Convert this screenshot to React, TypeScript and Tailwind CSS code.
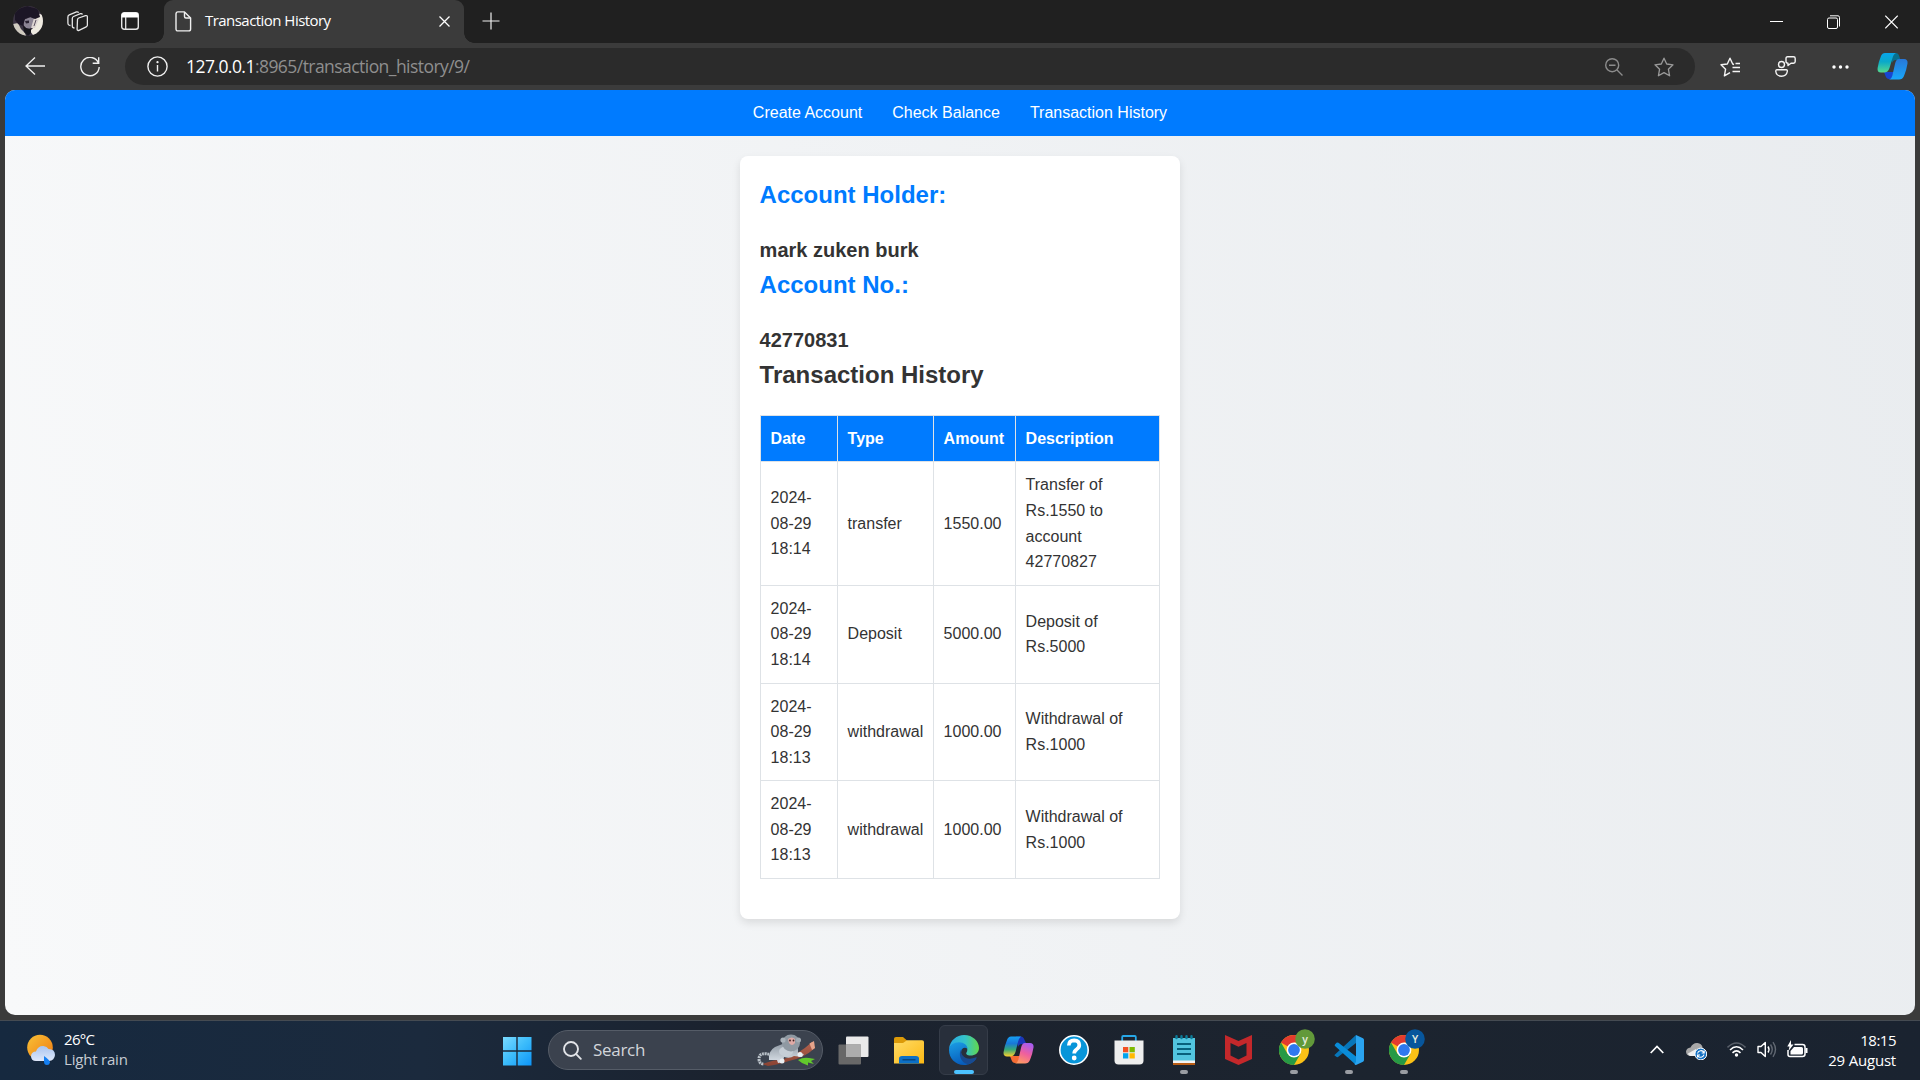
import React from "react";

const ui = "font-['Open_Sans','Noto_Sans',sans-serif]";

function Chrome({ letter, color }: { letter: string; color: string }) {
  return (
    <svg className="h-9 w-9" viewBox="0 0 36 36">
      <circle cx="15" cy="21" r="15" fill="#fbc116" />
      <path d="M15 21 L2 13.5 A15 15 0 0 1 28 13.5 H15Z" fill="#e33b2e" />
      <path d="M2 13.5 A15 15 0 0 0 15 36 L21.5 24.7 L15 21 L8.5 24.7Z" fill="#269a45" />
      <circle cx="15" cy="21" r="7.4" fill="#fff" />
      <circle cx="15" cy="21" r="5.9" fill="#2f78ee" />
      <circle cx="26" cy="10" r="9.8" fill={color} />
      <text x="26" y="13.500" textAnchor="middle" fontSize="10.5" fontWeight="600" fill="#e8eee0" fontFamily="Open Sans, sans-serif">{letter}</text>
    </svg>
  );
}

function Avatar() {
  return (
    <svg className="h-[30px] w-[30px]" viewBox="0 0 30 30">
      <defs><clipPath id="av"><circle cx="15" cy="15" r="15" /></clipPath><filter id="avb"><feGaussianBlur stdDeviation=".6" /></filter></defs>
      <g clipPath="url(#av)">
        <rect width="30" height="30" fill="#3a3342" />
        <g filter="url(#avb)">
          <path d="M0 18 L5 17 L8 23 L12 27 L13 30 H3 L0 25Z" fill="#cfcabf" />
          <path d="M10 14 L18 11 L22 13 L20 20 L15 24 L11 20Z" fill="#8b8494" />
          <path d="M12 15 L16 14.500 L16 17 L13 17.500Z" fill="#2a2231" />
          <path d="M24 7 L30 9 V24 L26 28 L20 29 L17 25 L22 20Z" fill="#eeeae0" />
          <path d="M21 12 L26 13 L22 22 L18 22Z" fill="#dcd4d2" />
          <path d="M23 14 L21 20" stroke="#5c5261" strokeWidth="1" />
          <path d="M2 4 L14 0 L25 3 L27 11 L22 13 L17 11 L12 13 L10 20 L5 18 L2 14Z" fill="#1f1726" />
          <path d="M10 19 L13 22 L18 23 L18 27 L15 30 L11 26Z" fill="#17121d" />
        </g>
      </g>
    </svg>
  );
}

function EdgeCopilot() {
  return (
    <svg className="h-[28px] w-[31px]" viewBox="0 0 31 28">
      <defs>
        <linearGradient id="c1" x1="0" y1="0" x2="0" y2="1"><stop stopColor="#08a5ea" /><stop offset=".45" stopColor="#0aa9c9" /><stop offset="1" stopColor="#56d98c" /></linearGradient>
        <linearGradient id="c2" x1="0" y1="0" x2="0" y2="1"><stop stopColor="#2877d8" /><stop offset="1" stopColor="#18a8fb" /></linearGradient>
      </defs>
      <path d="M7 20 H17 L15 26 Q14 27.5 12 27 Q9.500 27 8.500 24Z" fill="#1746d1" />
      <path d="M13 1 H19 Q21.500 1 22.500 5 L23.500 8 H19 Q16 8 15 11Z" fill="#08708e" />
      <path d="M8 1 H19 Q16.500 2 15.500 6 L12.500 16 Q11 20.500 7 20.500 H4 Q0 20.500 .6 16 Q1.500 10 4 4 Q5.200 1 8 1Z" fill="url(#c1)" />
      <path d="M22 7 H27 Q31 7 30.500 11.500 Q29.500 18 27 24 Q25.500 27.500 22 27.500 H12 Q14.500 27 15.500 23 L18 12 Q19 7 22 7Z" fill="url(#c2)" />
    </svg>
  );
}

function TaskCopilot() {
  return (
    <svg className="h-[28px] w-[31px]" viewBox="0 0 31 28">
      <defs>
        <linearGradient id="t1" x1="0" y1="0" x2="0" y2="1"><stop stopColor="#16a0f4" /><stop offset=".35" stopColor="#1978d8" /><stop offset=".65" stopColor="#36a978" /><stop offset="1" stopColor="#ffd12b" /></linearGradient>
        <linearGradient id="t2" x1=".7" y1="0" x2=".3" y2="1"><stop stopColor="#a65cf0" /><stop offset=".5" stopColor="#ef5f9e" /><stop offset="1" stopColor="#ff9b62" /></linearGradient>
      </defs>
      <path d="M7 20 H17 L15 26 Q14 27.500 12 27 Q9.500 27 8.500 24Z" fill="#f46c33" />
      <path d="M13 .5 H18 Q20.500 .5 21.500 4 L23.500 8 H19 Q16 8 15 11Z" fill="#1b36b9" />
      <path d="M8 .5 H18 Q16 2 15 6 L12.500 16 Q11 20.500 7 20.500 H4 Q0 20.500 .6 16 Q1.500 10 4 4 Q5.200 .5 8 .5Z" fill="url(#t1)" />
      <path d="M22 7 H27 Q31 7 30.500 11.500 Q29.500 18 27 24 Q25.500 27.500 22 27.500 H12 Q14.500 27 15.500 23 L18 12 Q19 7 22 7Z" fill="url(#t2)" />
    </svg>
  );
}

function Monkey() {
  return (
    <svg className="h-[34px] w-[60px]" viewBox="0 0 60 34">
      <defs>
        <linearGradient id="mk" x1="0" y1="0" x2="0" y2="1"><stop stopColor="#8f99a3" /><stop offset="1" stopColor="#dbe2e9" /></linearGradient>
        <linearGradient id="br" x1="0" y1="0" x2="0" y2="1"><stop stopColor="#b3634f" /><stop offset="1" stopColor="#8a4232" /></linearGradient>
      </defs>
      <path d="M41 27 Q46 24 52 25 L58 26 L54 28 L57 31 L51 29.500 L51 32.500 L45 30Z" fill="#62c92c" />
      <path d="M5 31 Q16 27 27 26 Q42 21 55 9 L58 15 Q47 25 32 28 Q20 32 11 33Z" fill="url(#br)" />
      <path d="M52.500 10.500 L57 8 L58 15 L55 17Z" fill="#e5a48b" />
      <path d="M15 22 Q2 18 2 26 Q2 31 7 31" fill="none" stroke="#b9c1c8" strokeWidth="3" strokeDasharray="2 .7" />
      <path d="M12 27 Q11 18 18 14 L28 10 L41 15 L41 20 L47 21 L45 24 L37 23 Q33 26 27 24 L26 29 L21 30 L20 27Z" fill="url(#mk)" />
      <ellipse cx="29" cy="18.500" rx="7" ry="5" fill="#c6ced6" />
      <ellipse cx="34" cy="10" rx="9" ry="8.500" fill="#8f99a2" />
      <circle cx="26" cy="7" r="2.600" fill="#aab3bb" /><circle cx="41.500" cy="7" r="2.500" fill="#a3acb4" />
      <path d="M31 6 Q35 3 38 6 L38 10 Q35 14 32 10Z" fill="#dfaaa6" />
      <circle cx="33" cy="7.500" r=".9" fill="#3d2222" /><circle cx="36.500" cy="7.500" r=".9" fill="#3d2222" />
      <circle cx="43" cy="21.500" r="2.500" fill="#e9eef2" /><circle cx="25" cy="28" r="2.500" fill="#e9eef2" />
    </svg>
  );
}

function TabStrip() {
  return (
    <div className={`flex h-[43px] items-end bg-[#202020] text-white ${ui}`}>
      <div className="flex h-[43px] w-[164px] shrink-0 items-center pl-[13px]">
        <div className="-mt-[2px]"><Avatar /></div>
        <svg className="ml-[24px] h-[21px] w-[21px]" viewBox="0 0 21 21" fill="none" stroke="#e6e6e6" strokeWidth="1.300" strokeLinejoin="round">
          <path d="M10.500 8.500 Q10.700 7.400 11.700 7 L18.500 4.700 Q20.400 4.300 20.400 6 V14 Q20.400 15.300 19.200 15.800 L12 19.300 Q10.100 20 10.100 18Z" />
          <path d="M7.500 17 Q5.300 17 5.300 15 V7.500 Q5.300 6 6.500 5.500 L13.500 2.700 Q15 2.400 15.500 3.500" />
          <path d="M3.500 14.500 Q.9 14.500 .9 12 V6 Q.9 4.500 2.300 3.900 L9.500 .9 Q11 .6 11.700 1.700" />
        </svg>
        <svg className="-mt-px ml-[33px] h-[18px] w-[18px]" viewBox="0 0 18 18">
          <rect x=".7" y=".7" width="16.600" height="16.600" rx="2.500" fill="none" stroke="#e6e6e6" strokeWidth="1.400" />
          <path d="M.7 5.500 V3 Q.7 .7 3 .7 H15 Q17.300 .7 17.300 3 V5.500Z" fill="#fff" />
          <path d="M4.700 5V17" stroke="#e6e6e6" strokeWidth="1.300" />
        </svg>
      </div>
      <div className="relative flex h-[43px] w-[300px] items-center rounded-t-[9px] bg-[#3b3b3b] pl-[11px] before:absolute before:bottom-0 before:-left-[10px] before:h-[10px] before:w-[10px] before:bg-[radial-gradient(circle_at_0_0,transparent_9.500px,#3b3b3b_10px)] after:absolute after:-right-[10px] after:bottom-0 after:h-[10px] after:w-[10px] after:bg-[radial-gradient(circle_at_100%_0,transparent_9.500px,#3b3b3b_10px)]">
        <svg className="h-[21px] w-[17px]" viewBox="0 0 17 21" fill="none" stroke="#f0f0f0" strokeWidth="1.400" strokeLinejoin="round">
          <path d="M3 .9 H9.500 L15.600 7 V18 Q15.600 19.900 13.700 19.900 H3 Q1 19.900 1 18 V3 Q1 .9 3 .9Z" /><path d="M9.500 1 V5.500 Q9.500 7 11 7 H15.500" />
        </svg>
        <span className="-mt-[3px] ml-[13px] w-[220px] text-[15px] leading-5 tracking-[-0.54px] whitespace-nowrap">Transaction History</span>
        <svg className="ml-[14px] h-[11px] w-[11px]" viewBox="0 0 11 11" stroke="#fff" strokeWidth="1.300"><path d="M.5 .5 L10.500 10.500 M10.500 .5 L.5 10.500" /></svg>
      </div>
      <svg className="mb-[13px] ml-[18px] h-[18px] w-[18px]" viewBox="0 0 18 18" stroke="#f0f0f0" strokeWidth="1.200"><path d="M9 .5 V17.500 M.5 9 H17.500" /></svg>
      <div className="mr-[22px] mb-[14px] ml-auto flex items-center">
        <svg className="h-[14px] w-[13px]" viewBox="0 0 13 14" stroke="#fff"><path d="M0 6.500H13" /></svg>
        <svg className="ml-[44px] h-[14px] w-[13px]" viewBox="0 0 13 14" fill="none" stroke="#fff"><rect x=".5" y="3" width="10" height="10.500" rx="1.500" /><path d="M3 .8 H11 Q12.500 .8 12.500 2.500 V11.500" /></svg>
        <svg className="ml-[45px] h-[14px] w-[13px]" viewBox="0 0 13 14" stroke="#fff" strokeWidth="1.100"><path d="M.3 .7 L12.700 13.300 M12.700 .7 L.3 13.300" /></svg>
      </div>
    </div>
  );
}

const star = "M10 1.200 L12.700 7 L19 7.800 L14.400 12.200 L15.600 18.800 L10 15.600 L4.400 18.800 L5.600 12.200 L1 7.800 L7.300 7Z";

function Toolbar() {
  return (
    <div className={`flex h-[47px] items-center bg-[#3b3b3b] ${ui}`}>
      <svg className="-mt-[2px] ml-[25px] h-[18px] w-[20px]" viewBox="0 0 20 18" fill="none" stroke="#f0f0f0" strokeWidth="1.300"><path d="M20 9 H1 M10 .5 L1 9 L10 17.500" /></svg>
      <svg className="ml-[35px] h-[20px] w-[20px]" viewBox="0 0 20 20" fill="none" stroke="#f0f0f0" strokeWidth="1.400"><path d="M18.500 6 A9.200 9.200 0 1 0 19.200 10 M18.700 .3 V6.300 H12.700" /></svg>
      <div className="ml-[25px] flex h-[37px] w-[1570px] items-center rounded-full bg-[#2b2b2b]">
        <svg className="ml-[22px] h-[21px] w-[21px]" viewBox="0 0 21 21" fill="none" stroke="#f0f0f0" strokeWidth="1.400"><circle cx="10.500" cy="10.500" r="9.600" /><path d="M10.500 9V15.500" /><circle cx="10.500" cy="6.200" r=".7" fill="#fff" stroke="none" /><circle cx="10.500" cy="6.200" r=".4" /></svg>
        <span className="-mt-[2px] ml-[18px] text-[17.500px] leading-6 tracking-[-0.550px] whitespace-nowrap text-[#8f8f8f]"><span className="text-white">127.0.0.1</span>:8965/transaction_history/9/</span>
        <svg className="ml-auto h-[18px] w-[18px]" viewBox="0 0 18 18" fill="none" stroke="#8c8c8c" strokeWidth="1.400"><circle cx="7.200" cy="7.200" r="6.500" /><path d="M12 12 L17.500 17.500 M4 7.200H10.500" /></svg>
        <svg className="mr-[21px] ml-[31px] h-[20px] w-[20px]" viewBox="0 0 20 20" fill="none" stroke="#9a9a9a" strokeWidth="1.300" strokeLinejoin="round"><path d={star} /></svg>
      </div>
      <svg className="ml-[25px] h-[20px] w-[20px]" viewBox="0 0 20 20" fill="none" stroke="#f5f5f5" strokeWidth="1.400" strokeLinejoin="round"><path d="M10 15.600 L4.400 18.800 L5.600 12.200 L1 7.800 L7.300 7 L10 1.200 L12.700 7 L14 7.500 M12.500 10.500H20 M12.500 14.500H20 M15.500 6.500H20" /></svg>
      <svg className="ml-[35px] h-[21px] w-[21px]" viewBox="0 0 21 21" fill="none" stroke="#f5f5f5" strokeWidth="1.400" strokeLinejoin="round"><circle cx="6.500" cy="8.500" r="3" /><path d="M2 13.700 H11.200 Q12.500 13.700 12.300 15.500 Q11.500 20.200 6.500 20.200 Q1.500 20.200 .8 15.500 Q.7 13.700 2 13.700Z M12.500 .8 H18.500 Q20.200 .8 20.200 2.500 V5.500 Q20.200 7.200 18.500 7.200 H16 L13 9.500 V7.200 Q11 7.200 11 5.500 V2.500 Q11 .8 12.500 .8Z" /></svg>
      <svg className="ml-[36px] h-[4px] w-[17px]" viewBox="0 0 17 4" fill="#fff"><circle cx="2" cy="2" r="1.700" /><circle cx="8.500" cy="2" r="1.700" /><circle cx="15" cy="2" r="1.700" /></svg>
      <div className="-mt-px ml-[28px]"><EdgeCopilot /></div>
    </div>
  );
}

const rows = [
  ["2024-08-29 18:14", "transfer", "1550.00", "Transfer of Rs.1550 to account 42770827"],
  ["2024-08-29 18:14", "Deposit", "5000.00", "Deposit of Rs.5000"],
  ["2024-08-29 18:13", "withdrawal", "1000.00", "Withdrawal of Rs.1000"],
  ["2024-08-29 18:13", "withdrawal", "1000.00", "Withdrawal of Rs.1000"],
];

function Page() {
  return (
    <main className="mx-[5px] h-[925px] overflow-hidden rounded-[10px] bg-[linear-gradient(76deg,#f8f9fa,#e9ecef)] font-['Liberation_Sans',Arial,sans-serif] text-base leading-[1.6] text-[#333]">
      <nav className="flex h-[45.6px] items-center justify-center gap-[30px] bg-[#007bff] text-white">
        <a>Create Account</a><a>Check Balance</a><a>Transaction History</a>
      </nav>
      <section className="mt-5 ml-[734.6px] w-[440px] rounded-lg bg-white p-5 shadow-[0_4px_8px_rgba(0,0,0,0.1)]">
        <h2 className="mb-5 text-2xl leading-[1.6] font-bold text-[#007bff]">Account Holder:</h2>
        <h3 className="text-xl leading-[1.6] font-bold">mark zuken burk</h3>
        <h2 className="mb-5 text-2xl leading-[1.6] font-bold text-[#007bff]">Account No.:</h2>
        <h3 className="text-xl leading-[1.6] font-bold">42770831</h3>
        <h2 className="mb-5 text-2xl leading-[1.6] font-bold">Transaction History</h2>
        <table className="mb-5 w-[400px] table-fixed border-collapse text-left">
          <colgroup><col className="w-[77px]" /><col className="w-[96px]" /><col className="w-[82px]" /><col /></colgroup>
          <thead><tr>{["Date", "Type", "Amount", "Description"].map((h) => <th key={h} className="border border-[#dee2e6] bg-[#007bff] p-[10px] font-bold text-white">{h}</th>)}</tr></thead>
          <tbody>{rows.map((r, i) => <tr key={i}>{r.map((c, j) => <td key={j} className="border border-[#dee2e6] p-[10px]">{c}</td>)}</tr>)}</tbody>
        </table>
      </section>
    </main>
  );
}

function Running() {
  return <span className="absolute bottom-px left-1/2 h-1 w-2 -translate-x-1/2 rounded-full bg-[#9a9da3]" />;
}

function Slot({ children, running = false }: { children: React.ReactNode; running?: boolean }) {
  return <div className="relative flex h-[50px] w-[55px] items-center justify-center">{children}{running && <Running />}</div>;
}

function Taskbar() {
  return (
    <footer className={`flex h-[60px] items-center border-t border-[#454b52] bg-[linear-gradient(to_right,#16293f,#1b2a3d_22%,#1b222e_38%,#1c242f_70%,#1a2330)] text-white ${ui}`}>
      <div className="-mt-[3px] flex w-[502px] items-center pl-[27px]">
        <svg className="h-[31px] w-[29px]" viewBox="0 0 29 31">
          <defs><linearGradient id="sun" x1="0" y1="0" x2="1" y2="1"><stop stopColor="#f8c136" /><stop offset="1" stopColor="#ef7a12" /></linearGradient><linearGradient id="cl" x1="0" y1="0" x2="0" y2="1"><stop stopColor="#a9c4ef" /><stop offset="1" stopColor="#dfe8fa" /></linearGradient></defs>
          <circle cx="13" cy="13.500" r="12.800" fill="url(#sun)" />
          <path d="M9 27 Q4 27 4 22 Q4.500 17.500 9 17.500 Q11 11.500 16.500 12 Q20 12.500 21.500 15 Q28 15 28 21 Q27.500 26.500 22 27Z" fill="url(#cl)" />
          <path d="M17 22 Q23 26 23 28.500 Q22.500 31 20 31 Q17 31 17 27.500Z" fill="#157ff2" />
        </svg>
        <div className="ml-[8px] text-[15px] leading-[20px] tracking-[-0.200px]"><div className="tracking-[-0.700px]">26°C</div><div className="text-[#c6cbd2]">Light rain</div></div>
      </div>
      <svg className="h-[30px] w-[30px]" viewBox="0 0 30 30"><defs><linearGradient id="win" gradientUnits="userSpaceOnUse" x1="0" y1="0" x2="30" y2="30"><stop stopColor="#7fdcff" /><stop offset=".5" stopColor="#3cbcfb" /><stop offset="1" stopColor="#0b93f8" /></linearGradient></defs><path d="M1 1H14.300V14.300H1Z M15.700 1H29.500V14.300H15.700Z M1 15.700H14.300V29.500H1Z M15.700 15.700H29.500V29.500H15.700Z" fill="url(#win)" /></svg>
      <div className="-mt-px ml-[16px] flex h-[40px] w-[275px] items-center rounded-full border border-[#555c67] bg-[#3b424e]">
        <svg className="ml-[14px] h-[19px] w-[19px]" viewBox="0 0 19 19" fill="none" stroke="#e2e4e8" strokeWidth="1.900" strokeLinecap="round"><circle cx="8" cy="8" r="7" /><path d="M13.200 13.200 L17.800 17.800" /></svg>
        <span className="ml-[11px] text-[17px] leading-6 tracking-[-0.300px] text-[#d2d5da]">Search</span>
        <div className="mr-[5px] ml-auto"><Monkey /></div>
      </div>
      <div className="-mt-px ml-[3px] flex items-center">
        <Slot><svg className="h-[29px] w-[31px]" viewBox="0 0 31 29"><rect x="8" y=".5" width="22.500" height="20.500" rx="1" fill="#eaeaea" /><rect x=".5" y="8.500" width="22.500" height="20" rx="1" fill="#686868" /><path d="M8 8.500H23V21H8Z" fill="#adadad" /></svg></Slot>
        <Slot><svg className="h-[27px] w-[30px]" viewBox="0 0 30 27"><defs><linearGradient id="fo" x1="0" y1="0" x2="1" y2="1"><stop stopColor="#ffdb66" /><stop offset="1" stopColor="#fcb914" /></linearGradient></defs><path d="M0 1.500 Q0 0 2 0 H9 L13 3.500 V8 H0Z" fill="#dc9a08" /><path d="M0 6 L9 6 L13 3.300 H28 Q30 3.300 30 5 V26.500 H0Z" fill="url(#fo)" /><path d="M5 26.500 V21.500 Q5 19 8 19 H22 Q25 19 25 21.500 V26.500Z" fill="#0c70c6" /><path d="M8.500 22.800H21.500" stroke="#073e70" strokeWidth="1.200" /></svg></Slot>
        <div className="relative mx-[3px] flex h-[50px] w-[49px] items-center justify-center rounded-[6px] border border-[#353c48] bg-[#282f3b]">
          <svg className="h-[30px] w-[30px]" viewBox="0 0 30 30"><defs><linearGradient id="e1"><stop stopColor="#27a9e8" /><stop offset=".55" stopColor="#35c3c7" /><stop offset="1" stopColor="#62d84b" /></linearGradient><linearGradient id="e2" x1="0" y1="0" x2=".4" y2="1"><stop stopColor="#1b9fe6" /><stop offset="1" stopColor="#075cbb" /></linearGradient></defs>
            <path d="M0 14 C1 5 8 0 15 0 C24 0 30 6.500 30 13 C30 18 26 20.500 21.500 20.500 C18 20.500 16.500 19 17.500 17.500 C20 14 17 9 10 9 C5 9 1 11 0 14Z" fill="url(#e1)" />
            <path d="M0 15 C0 10 5 7.200 10 7.200 C15 7.200 18.700 10.500 18.500 14 C16 11.500 12 13 12 18 C12 24 18 28 27 23.500 C25 27.500 20 30 15 30 C6 30 0 23 0 15Z" fill="url(#e2)" />
            <path d="M12.500 14 C9 18 11 28 19.500 29.300 C23 28.500 26 26 27.500 23.300 C28 22.300 27.300 22 26.500 22.500 C18 26 10.500 21 12.500 14Z" fill="#174a91" />
          </svg>
          <span className="absolute bottom-[0px] left-1/2 h-1 w-5 -translate-x-1/2 rounded-full bg-[#4cc2ff]" />
        </div>
        <Slot><TaskCopilot /></Slot>
        <Slot><svg className="h-[30px] w-[30px]" viewBox="0 0 30 30"><circle cx="15" cy="15" r="14.200" fill="#0795d9" stroke="#fff" strokeWidth="1.600" /><path d="M9.800 10.500 Q10 5.300 15.200 5.300 Q20.300 5.500 20.300 10 Q20.300 12.500 17.700 14.300 Q15.200 15.800 15.200 18.500" fill="none" stroke="#fff" strokeWidth="3.700" /><circle cx="15.200" cy="23" r="2.400" fill="#fff" /></svg></Slot>
        <Slot><svg className="h-[30px] w-[30px]" viewBox="0 0 30 30"><path d="M8.200 7 V2 Q8.200 1 9.200 1 H20.800 Q21.800 1 21.800 2 V7" fill="none" stroke="#27a8e8" strokeWidth="1.800" /><path d="M.5 5.500 H29.500 V25.500 Q29.500 29.500 25.500 29.500 H4.500 Q.5 29.500 .5 25.500Z" fill="#eee" /><path d="M9 12H14.300V17.300H9Z" fill="#f25022" /><path d="M15.500 12H20.800V17.300H15.500Z" fill="#7fba00" /><path d="M9 18.200H14.300V23.500H9Z" fill="#00a4ef" /><path d="M15.500 18.200H20.800V23.500H15.500Z" fill="#ffb900" /></svg></Slot>
        <Slot running><svg className="h-[30px] w-[22px]" viewBox="0 0 22 30"><path d="M0 3 H22 V27 H0Z" fill="#52c5df" /><path d="M0 25.500H22V28H0Z" fill="#f3f3f3" /><path d="M0 28H22V30H0Z" fill="#b85c14" /><path d="M3.500 1.200V3 M8.500 1.200V3 M13.500 1.200V3 M18.500 1.200V3" stroke="#0b7c99" strokeWidth="2.400" strokeLinecap="round" /><path d="M4 9H18 M4 14H18 M4 19H18" stroke="#08617c" strokeWidth="1.800" /></svg></Slot>
        <Slot><svg className="h-[30px] w-[27px]" viewBox="0 0 27 30"><path d="M0 0 L13.500 6 L27 0 V24 L13.500 30 L0 24Z M5.500 8 V20.500 L13.500 24.500 L21.500 20.500 V8 L13.500 11.800Z" fill="#c4282b" fillRule="evenodd" /></svg></Slot>
        <Slot running><div className="-mt-[6px] ml-[6px]"><Chrome letter="y" color="#62993a" /></div></Slot>
        <Slot running><svg className="h-[30px] w-[30px]" viewBox="0 0 30 30"><path d="M1 19.500 L22 0 V8 L4 22 Q3 22.500 2 21.500 L.6 20.500 Q.2 20 1 19.500Z" fill="#0876b9" /><path d="M1 9.500 L2.500 7.800 Q3.500 7 4.500 7.800 L22 21.500 V30 L1 11 Q.3 10.200 1 9.500Z" fill="#0a8cd8" /><path d="M22 0 L29 3.200 Q30 3.700 30 5 V25 Q30 26.300 29 26.800 L22 30 Q21 30 20.500 29 L22 27Z" fill="#2aa4f0" /></svg></Slot>
        <Slot running><div className="-mt-[6px] ml-[6px]"><Chrome letter="Y" color="#07569c" /></div></Slot>
      </div>
      <div className="-mt-[2px] mr-[24px] ml-auto flex items-center">
        <svg className="h-[9px] w-[14px]" viewBox="0 0 14 9" fill="none" stroke="#fff" strokeWidth="1.700"><path d="M.7 8 L7 1.500 L13.300 8" /></svg>
        <svg className="mt-[3px] ml-[22px] h-[18px] w-[21px]" viewBox="0 0 21 18"><path d="M4.500 14 Q0 13.500 0 9.500 Q.5 6 4.500 5.500 Q7 .5 11.500 1 Q15.500 1.500 16.500 5 V14Z" fill="#a8a8a8" /><path d="M4 14 Q2 13 2 11.500 L10 7 L14 14Z" fill="#eee" /><circle cx="14.800" cy="12" r="5.900" fill="#1672c4" stroke="#fff" /><path d="M11.500 11.500 A3.500 3.500 0 0 1 18 10.500 M18.200 8.500V11H15.700 M18 12.700 A3.500 3.500 0 0 1 11.700 13.700 M11.500 15.500V13H14" fill="none" stroke="#fff" strokeWidth="1.100" /></svg>
        <svg className="ml-[20px] h-[15px] w-[19px]" viewBox="0 0 19 15" fill="none" stroke="#fff" strokeWidth="1.600"><path d="M.5 5.500 Q9.500 -3.500 18.500 5.500" stroke="#59606a" /><path d="M3 8 Q9.500 1.500 16 8 M5.500 10.800 Q9.500 7 13.500 10.800" /><circle cx="9.500" cy="13" r="1.700" fill="#fff" stroke="none" /></svg>
        <svg className="ml-[11px] h-[17px] w-[20px]" viewBox="0 0 20 17" fill="none" stroke="#fff" strokeWidth="1.400"><path d="M1 5.500H4L8.300 1.500V15.500L4 11.500H1Z" strokeLinejoin="round" /><path d="M11 5.500 Q13 8.500 11 11.500" /><path d="M13.500 3.500 Q17 8.500 13.500 13.500 M16 1.200 Q21 8.500 16 15.800" stroke="#626973" /></svg>
        <svg className="-mt-px ml-[10px] h-[18px] w-[21px]" viewBox="0 0 21 18"><path d="M7.500 4.500H15.500Q18 4.500 18 7V14Q18 16.500 15.500 16.500H3Q1 16.500 1 14.500V10" fill="none" stroke="#fff" strokeWidth="1.500" /><path d="M3.500 14.500V11L7 7H14.500Q16 7 16 8.500V13Q16 14.500 14.500 14.500Z M18.500 8H20.500V13H18.500Z" fill="#fff" /><path d="M4 0 L.3 6.500 H2.500 L1.500 11 L6.500 4.500 H4Z" fill="#fff" /></svg>
        <div className="ml-[20px] text-right text-[15px] leading-[20px] tracking-[-0.200px]"><div className="tracking-[-0.500px]">18:15</div><div>29 August</div></div>
      </div>
    </footer>
  );
}

export default function App() {
  return (
    <div className="h-[1080px] w-[1920px] overflow-hidden bg-[#3b3b3b]">
      <TabStrip /><Toolbar /><Page />
      <div className="h-[5px]" />
      <Taskbar />
    </div>
  );
}
